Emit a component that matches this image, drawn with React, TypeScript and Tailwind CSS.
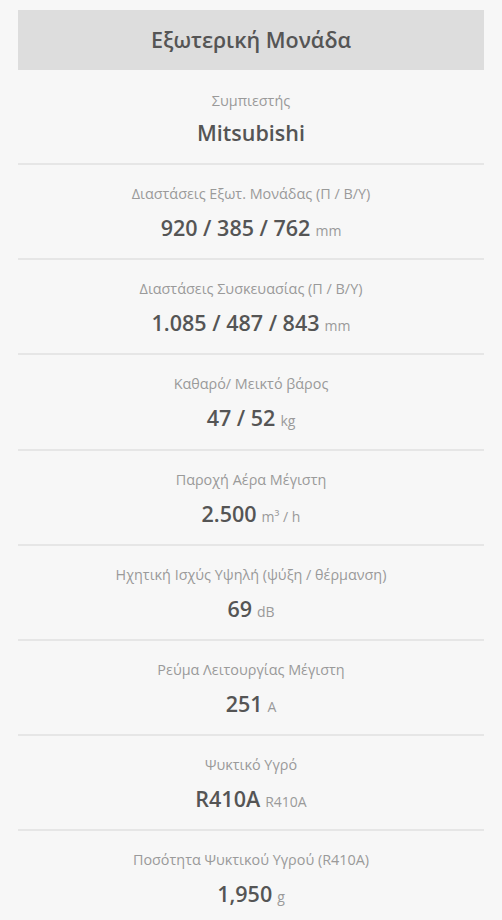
const specs: { label: string; value: string; unit?: string }[] = [
  { label: "Συμπιεστής", value: "Mitsubishi" },
  { label: "Διαστάσεις Εξωτ. Μονάδας (Π / Β/Υ)", value: "920 / 385 / 762", unit: "mm" },
  { label: "Διαστάσεις Συσκευασίας (Π / Β/Υ)", value: "1.085 / 487 / 843", unit: "mm" },
  { label: "Καθαρό/ Μεικτό βάρος", value: "47 / 52", unit: "kg" },
  { label: "Παροχή Αέρα Μέγιστη", value: "2.500", unit: "m³ / h" },
  { label: "Ηχητική Ισχύς Υψηλή (ψύξη / θέρμανση)", value: "69", unit: "dB" },
  { label: "Ρεύμα Λειτουργίας Μέγιστη", value: "251", unit: "A" },
  { label: "Ψυκτικό Υγρό", value: "R410A", unit: "R410A" },
  { label: "Ποσότητα Ψυκτικού Υγρού (R410A)", value: "1,950", unit: "g" },
];

export default function App() {
  return (
    <div className="h-[920px] w-full overflow-hidden bg-[#f7f7f7] px-[18px] pt-[10px] font-['Open_Sans',sans-serif]">
      <div className="flex h-[60px] items-center justify-center bg-[#dddddd]">
        <h2 className="text-[21.5px] font-semibold text-[#555555]">Εξωτερική Μονάδα</h2>
      </div>
      <div className="flex flex-col">
        {specs.map((s, i) => (
          <div
            key={s.label}
            className={`flex flex-col items-center text-center ${
              i === 0 ? "pt-[21px] pb-[16px]" : "pt-[19px] pb-[16.2px]"
            } ${i < specs.length - 1 ? "border-b-2 border-[#e6e6e6]" : ""}`}
          >
            <div className="h-[20px] text-[14.4px] leading-[20px] text-[#9a9a9a]">{s.label}</div>
            <div
              className={`${i === 0 ? "mt-[8px]" : "mt-[10px]"} flex h-[28px] items-baseline justify-center leading-[28px] text-[#555555]`}
            >
              <span className="text-[21.5px] font-semibold">{s.value}</span>
              {s.unit && <span className="ml-[5px] text-[14px] text-[#9a9a9a]">{s.unit}</span>}
            </div>
          </div>
        ))}
      </div>
    </div>
  );
}
